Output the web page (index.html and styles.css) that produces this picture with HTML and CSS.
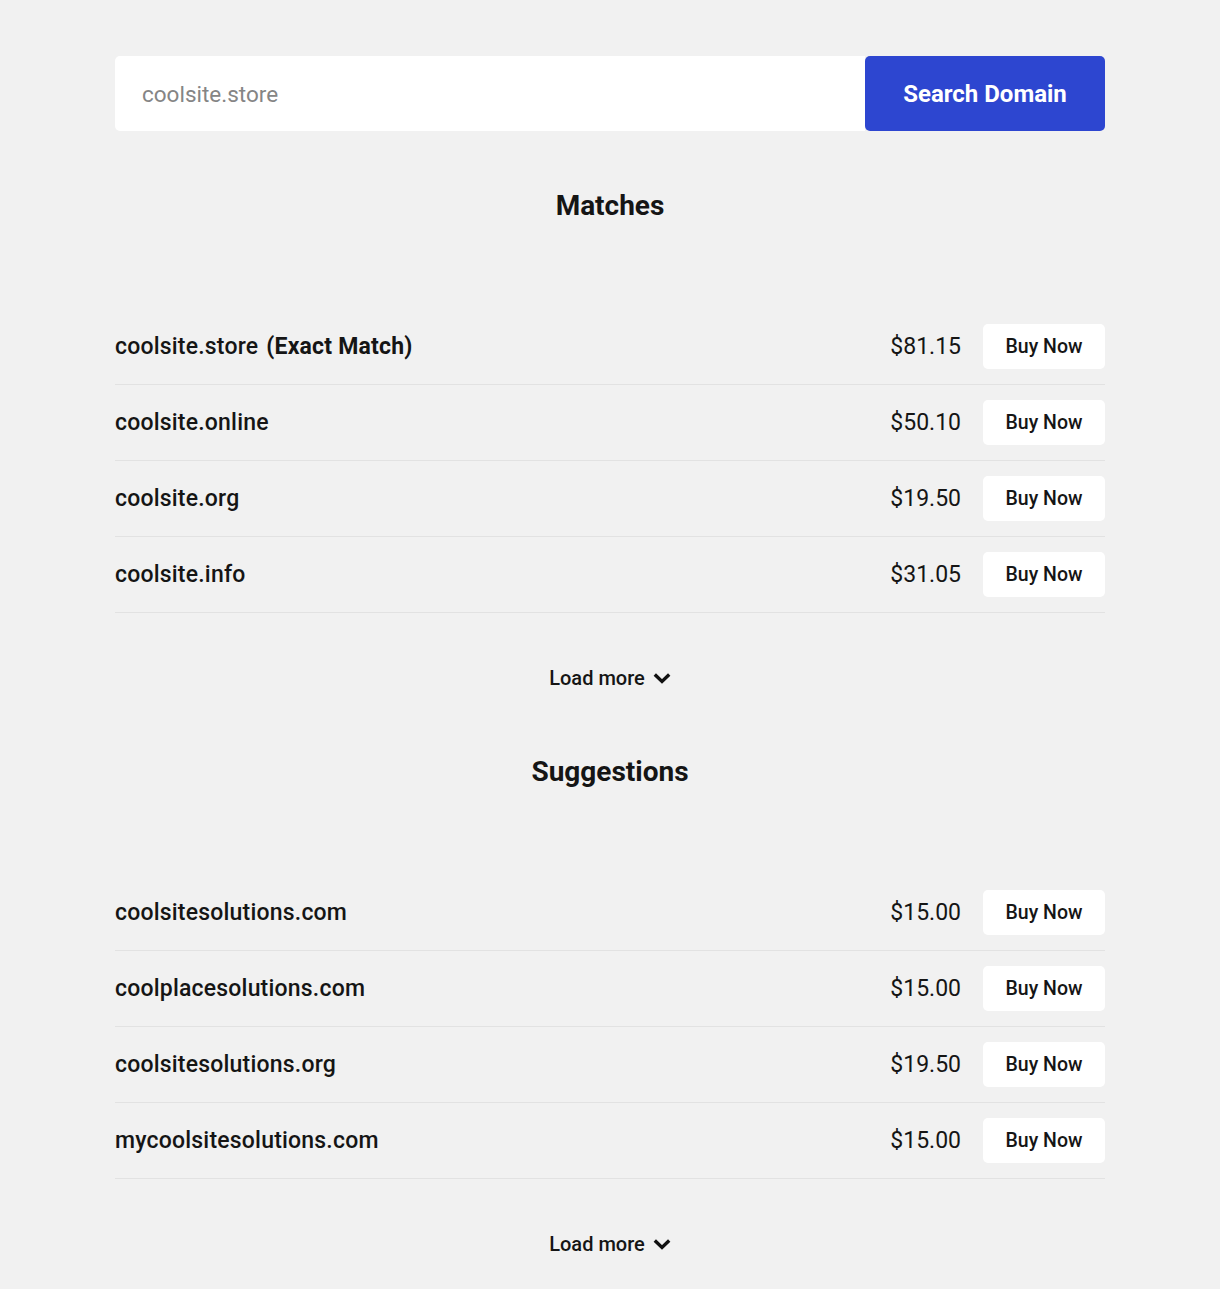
FILE: index.html
```html
<!DOCTYPE html>
<html lang="en">
<head>
<meta charset="utf-8">
<title>Domain Search</title>
<link rel="stylesheet" href="styles.css">
</head>
<body>
<main class="page">
  <form class="search">
    <input class="search-input" type="text" placeholder="coolsite.store">
    <button class="search-btn" type="button">Search Domain</button>
  </form>

  <section class="section">
    <h2 class="section-title">Matches</h2>
    <ul class="list">
      <li class="row"><span class="domain">coolsite.store <b>(Exact Match)</b></span><span class="price">$81.15</span><button class="buy" type="button">Buy Now</button></li>
      <li class="row"><span class="domain">coolsite.online</span><span class="price">$50.10</span><button class="buy" type="button">Buy Now</button></li>
      <li class="row"><span class="domain">coolsite.org</span><span class="price">$19.50</span><button class="buy" type="button">Buy Now</button></li>
      <li class="row"><span class="domain">coolsite.info</span><span class="price">$31.05</span><button class="buy" type="button">Buy Now</button></li>
    </ul>
    <button class="more" type="button">Load more <svg class="chev" width="18" height="12" viewBox="0 0 18 12"><path d="M1.8 2.6 L9 9.4 L16.2 2.6" fill="none" stroke="#111" stroke-width="3.4"/></svg></button>
  </section>

  <section class="section">
    <h2 class="section-title">Suggestions</h2>
    <ul class="list">
      <li class="row"><span class="domain">coolsitesolutions.com</span><span class="price">$15.00</span><button class="buy" type="button">Buy Now</button></li>
      <li class="row"><span class="domain">coolplacesolutions.com</span><span class="price">$15.00</span><button class="buy" type="button">Buy Now</button></li>
      <li class="row"><span class="domain">coolsitesolutions.org</span><span class="price">$19.50</span><button class="buy" type="button">Buy Now</button></li>
      <li class="row"><span class="domain">mycoolsitesolutions.com</span><span class="price">$15.00</span><button class="buy" type="button">Buy Now</button></li>
    </ul>
    <button class="more" type="button">Load more <svg class="chev" width="18" height="12" viewBox="0 0 18 12"><path d="M1.8 2.6 L9 9.4 L16.2 2.6" fill="none" stroke="#111" stroke-width="3.4"/></svg></button>
  </section>
</main>
</body>
</html>
```

FILE: styles.css
```css
* { box-sizing: border-box; }
html, body { margin: 0; padding: 0; }
body {
  background: #f1f1f1;
  font-family: Roboto, "Liberation Sans", sans-serif;
  color: #151515;
}
.page {
  width: 990px;
  margin: 0 auto;
  padding-top: 56px;
}
.search {
  display: flex;
  height: 75px;
  margin: 0;
}
.search-input {
  flex: 1;
  border: none;
  background: #fff;
  border-radius: 5px 0 0 5px;
  padding: 0 27px;
  font-family: inherit;
  font-size: 22.5px;
  color: #333;
  outline: none;
}
.search-input::placeholder { color: #858585; }
.search-btn {
  width: 240px;
  border: none;
  border-radius: 5px;
  background: #2d46d0;
  color: #fff;
  font-family: inherit;
  font-size: 24px;
  font-weight: 700;
  cursor: pointer;
}
.section { display: flex; flex-direction: column; }
.section-title {
  margin: 57px 0 0;
  text-align: center;
  font-size: 28px;
  font-weight: 700;
  line-height: 36px;
}
.list {
  list-style: none;
  margin: 85px 0 0;
  padding: 0;
}
.row {
  display: flex;
  align-items: center;
  padding: 15px 0;
  border-bottom: 1px solid #e2e2e2;
}
.domain {
  flex: 1;
  font-size: 23px;
  font-weight: 500;
  letter-spacing: 0.2px;
}
.domain b { font-weight: 700; margin-left: 2px; }
.price {
  font-size: 23px;
  font-weight: 400;
  margin-right: 22px;
}
.buy {
  width: 122px;
  height: 45px;
  border: none;
  border-radius: 5px;
  background: #fff;
  color: #151515;
  font-family: inherit;
  font-size: 19.5px;
  font-weight: 500;
  cursor: pointer;
}
.more {
  align-self: center;
  margin-top: 52px;
  margin-bottom: 6px;
  border: none;
  background: none;
  padding: 0;
  font-family: inherit;
  font-size: 20px;
  font-weight: 500;
  color: #151515;
  display: flex;
  align-items: center;
  gap: 8px;
  line-height: 26px;
  cursor: pointer;
}
.chev { display: block; }
```
